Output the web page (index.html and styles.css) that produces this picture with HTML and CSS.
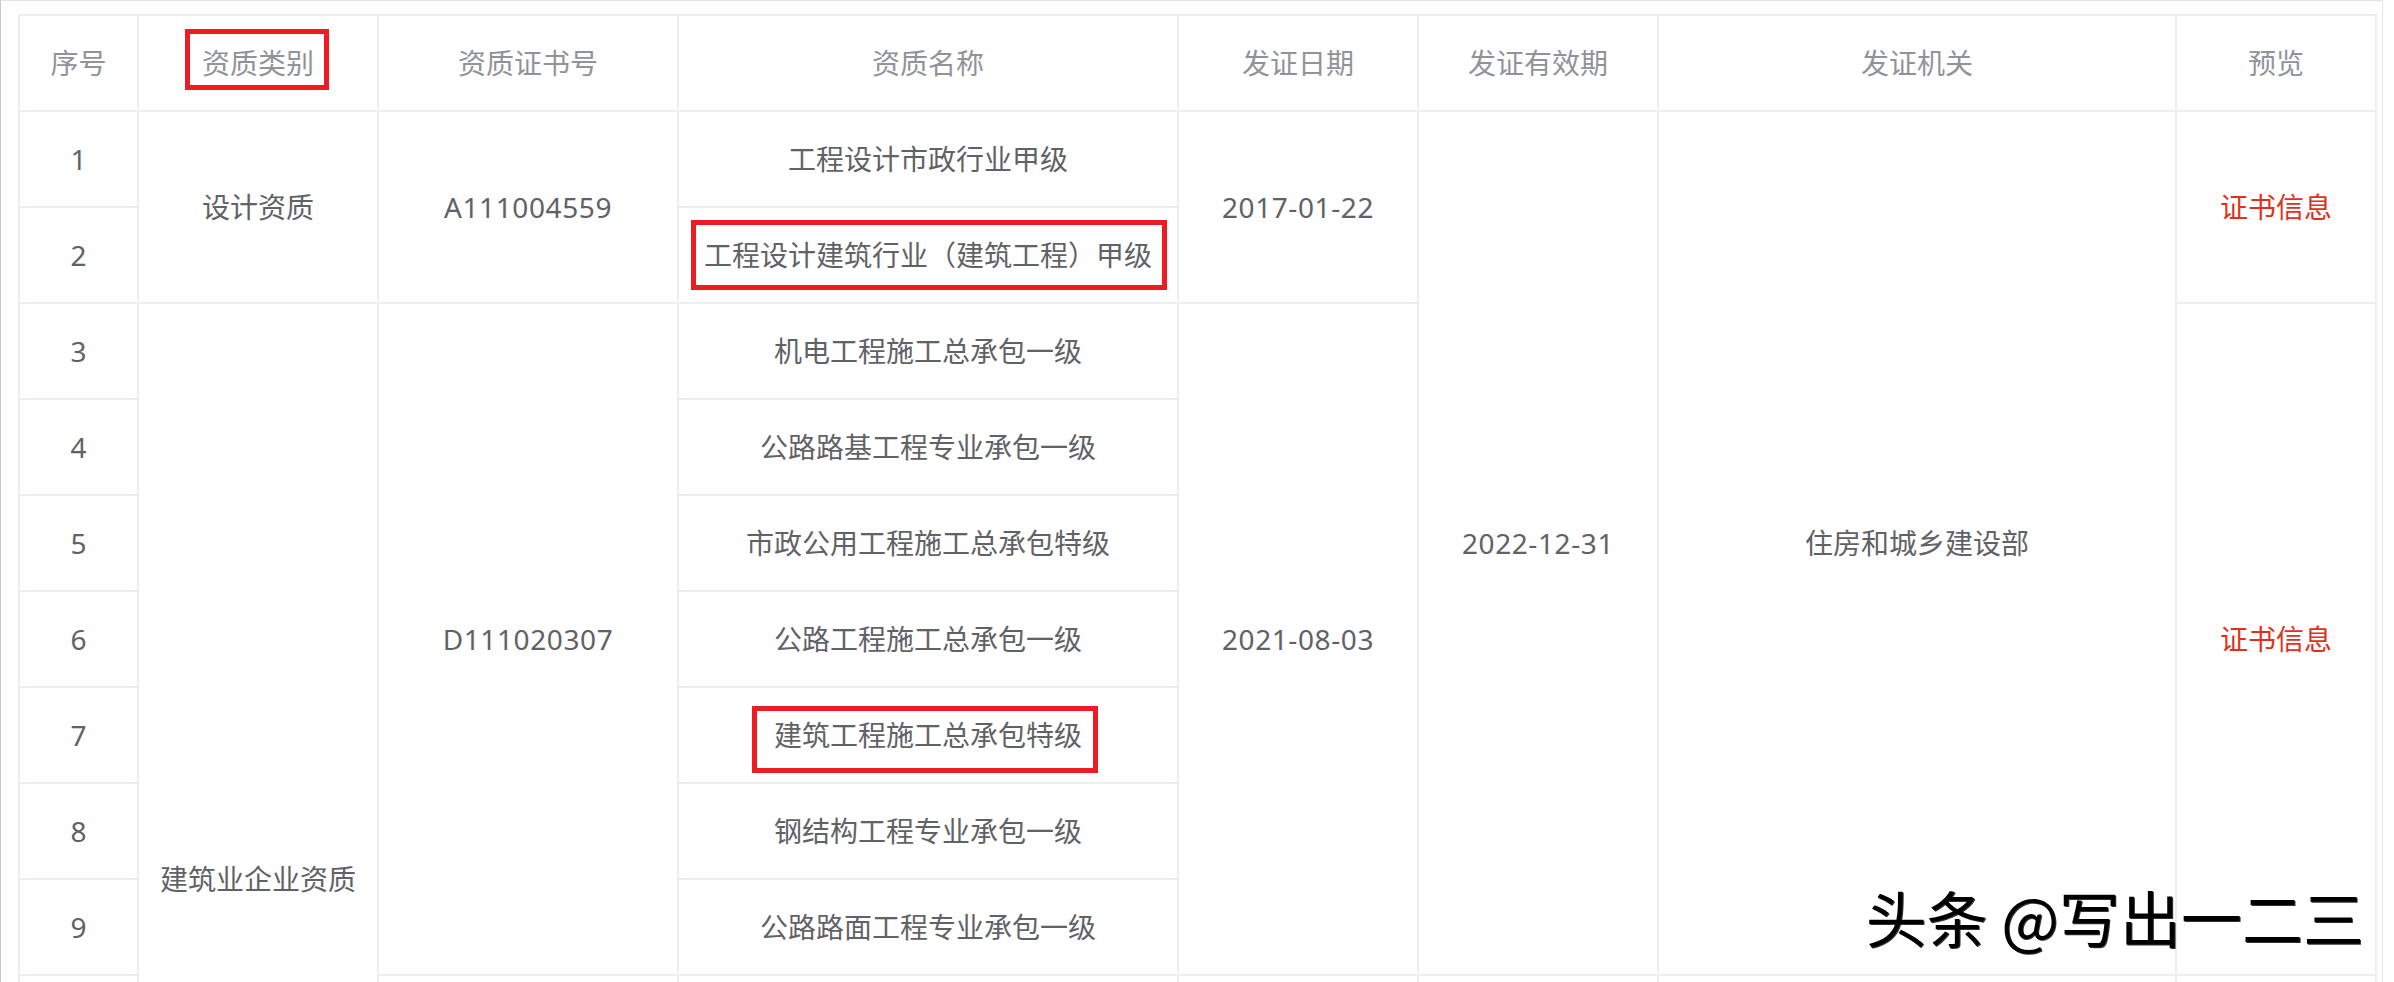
FILE: index.html
```html
<!DOCTYPE html>
<html lang="zh-CN">
<head>
<meta charset="utf-8">
<title>资质证书</title>
<link rel="stylesheet" href="styles.css">
</head>
<body>
<div class="frame">
  <table class="qual">
    <colgroup>
      <col class="c-idx"><col class="c-cat"><col class="c-no"><col class="c-name">
      <col class="c-date"><col class="c-valid"><col class="c-org"><col class="c-view">
    </colgroup>
    <thead>
      <tr>
        <th>序号</th>
        <th><span class="mark mark-head">资质类别</span></th>
        <th>资质证书号</th>
        <th>资质名称</th>
        <th>发证日期</th>
        <th>发证有效期</th>
        <th>发证机关</th>
        <th>预览</th>
      </tr>
    </thead>
    <tbody>
      <tr>
        <td>1</td>
        <td rowspan="2">设计资质</td>
        <td rowspan="2" class="num">A111004559</td>
        <td>工程设计市政行业甲级</td>
        <td rowspan="2" class="num">2017-01-22</td>
        <td rowspan="9" class="num">2022-12-31</td>
        <td rowspan="9">住房和城乡建设部</td>
        <td rowspan="2"><a class="link">证书信息</a></td>
      </tr>
      <tr>
        <td>2</td>
        <td><span class="mark mark-r2">工程设计建筑行业（建筑工程）甲级</span></td>
      </tr>
      <tr>
        <td>3</td>
        <td rowspan="12">建筑业企业资质</td>
        <td rowspan="7" class="num">D111020307</td>
        <td>机电工程施工总承包一级</td>
        <td rowspan="7" class="num">2021-08-03</td>
        <td rowspan="7"><a class="link">证书信息</a></td>
      </tr>
      <tr><td>4</td><td>公路路基工程专业承包一级</td></tr>
      <tr><td>5</td><td>市政公用工程施工总承包特级</td></tr>
      <tr><td>6</td><td>公路工程施工总承包一级</td></tr>
      <tr><td>7</td><td><span class="mark mark-r7">建筑工程施工总承包特级</span></td></tr>
      <tr><td>8</td><td>钢结构工程专业承包一级</td></tr>
      <tr><td>9</td><td>公路路面工程专业承包一级</td></tr>
      <tr>
        <td></td>
        <td rowspan="5"></td>
        <td></td>
        <td rowspan="5"></td>
        <td rowspan="5"></td>
        <td rowspan="5"></td>
        <td rowspan="5"></td>
      </tr>
      <tr><td></td><td></td></tr>
      <tr><td></td><td></td></tr>
      <tr><td></td><td></td></tr>
      <tr><td></td><td></td></tr>
    </tbody>
  </table>
  <div class="watermark">头条 @写出一二三</div>
</div>
</body>
</html>
```
FILE: styles.css
```css
* { box-sizing: border-box; }
html, body { margin: 0; padding: 0; background: #fff; }
body { font-family: "Noto Sans", "Noto Sans CJK SC", sans-serif; }

.frame {
  position: relative;
  width: 2383px;
  height: 982px;
  overflow: hidden;
  border-top: 1px solid #e3e3e3;
  border-left: 1px solid #c9c9c9;
  border-right: 1px solid #e6e6e6;
  padding: 13px 0 0 17px;
}

.qual {
  border-collapse: separate;
  border-spacing: 0;
  table-layout: fixed;
  width: 2359px;
  border-top: 2px solid #ebeef5;
  border-left: 2px solid #ebeef5;
  font-size: 28px;
  color: #606266;
}
.c-idx { width: 119px; }
.c-cat { width: 240px; }
.c-no { width: 300px; }
.c-name { width: 500px; }
.c-date { width: 240px; }
.c-valid { width: 240px; }
.c-org { width: 518px; }
.c-view { width: 200px; }

.qual tr { height: 96px; }
.qual th, .qual td {
  border-right: 2px solid #ebeef5;
  border-bottom: 2px solid #ebeef5;
  padding: 0;
  text-align: center;
  vertical-align: middle;
  font-weight: 400;
  line-height: 42px;
  white-space: nowrap;
}
.qual th { color: #909399; }
.qual .num { letter-spacing: 0.6px; }

.link { color: #e0301e; text-decoration: none; }

.mark { position: relative; display: inline-block; line-height: 28px; }
.mark::after {
  content: "";
  position: absolute;
  border: 5px solid #ed1c24;
}
.mark-head::after { top: -20px; bottom: -13px; left: -17px; right: -15px; }
.mark-r2::after { top: -21px; bottom: -21px; left: -13px; right: -15px; }
.mark-r7::after { top: -15px; bottom: -24px; left: -22px; right: -16px; }

.watermark {
  position: absolute;
  right: 18px;
  top: 885px;
  font-family: "Noto Sans CJK SC", sans-serif;
  font-size: 61px;
  line-height: 61px;
  font-weight: 400;
  color: #000;
  white-space: nowrap;
  text-shadow: 1px 1px 0 #333;
}
```
